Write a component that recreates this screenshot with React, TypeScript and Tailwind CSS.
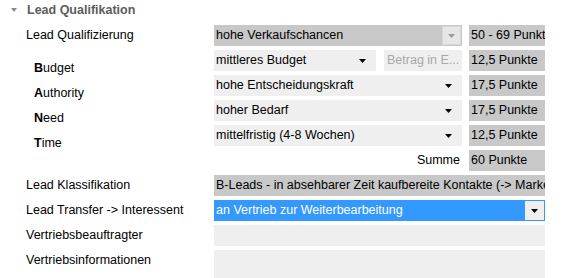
import React from 'react';

// caret icons used by the select boxes
function Caret({ color = '#000' }: { color?: string }) {
  return (
    <svg width="7" height="4" viewBox="0 0 7 4">
      <path d="M0 0h7L3.5 4z" fill={color} />
    </svg>
  );
}

function Row({ label, children, bant, tall }: { label: React.ReactNode; children: React.ReactNode; bant?: boolean; tall?: boolean }) {
  return (
    <div className={`flex ${tall ? 'h-[40px]' : 'h-[21px]'}`}>
      {bant ? (
        <div className="w-[214px] shrink-0 pl-[34px] pt-[11px] leading-[14px] whitespace-nowrap">{label}</div>
      ) : (
        <div className="w-[214px] shrink-0 pl-[26px] h-[21px] flex items-center whitespace-nowrap">{label}</div>
      )}
      {children}
    </div>
  );
}

function Points({ children }: { children: React.ReactNode }) {
  return (
    <div className="w-[76px] ml-[7px] shrink-0 bg-[#c8c8c8] pl-[2px] flex items-center overflow-hidden whitespace-nowrap">
      {children}
    </div>
  );
}

function Select({ value, className = 'w-[248px]' }: { value: string; className?: string }) {
  return (
    <div className={`${className} shrink-0 bg-[#efefef] pl-[2px] pr-[10px] flex items-center justify-between whitespace-nowrap`}>
      <span>{value}</span>
      <Caret />
    </div>
  );
}

function Bant({ letter, rest }: { letter: string; rest: string }) {
  return (
    <span>
      <b>{letter}</b>
      {rest}
    </span>
  );
}

export default function App() {
  return (
    <div className="w-[568px] h-[278px] overflow-hidden bg-white text-[12.5px] text-black font-['Liberation_Sans',Arial,sans-serif]">
      {/* Section header */}
      <div className="h-[20px] flex items-center pl-[11px]">
        <svg width="6" height="4" viewBox="0 0 6 4" className="mr-[10px]">
          <path d="M0 0h6L3 4z" fill="#8a8a8a" />
        </svg>
        <span className="font-bold text-[12.5px] text-[#5c5c5c]">Lead Qualifikation</span>
      </div>

      <div className="flex flex-col gap-[4px] pt-[5px]">
        <Row label="Lead Qualifizierung">
          <div className="w-[248px] shrink-0 bg-[#c8c8c8] pl-[2px] flex items-center justify-between">
            <span>hohe Verkaufschancen</span>
            <div className="w-[19px] h-[19px] mr-[1px] bg-[#e6e6e6] border border-[#d8d8d8] flex items-center justify-center">
              <Caret color="#9a9a9a" />
            </div>
          </div>
          <Points>50 - 69 Punkte</Points>
        </Row>

        <Row bant label={<Bant letter="B" rest="udget" />}>
          <Select value="mittleres Budget" className="w-[162px]" />
          <div className="w-[78px] ml-[8px] shrink-0 bg-[#efefef] pl-[3px] flex items-center text-[#a8a8a8] whitespace-nowrap overflow-hidden">
            Betrag in E...
          </div>
          <Points>12,5 Punkte</Points>
        </Row>

        <Row bant label={<Bant letter="A" rest="uthority" />}>
          <Select value="hohe Entscheidungskraft" />
          <Points>17,5 Punkte</Points>
        </Row>

        <Row bant label={<Bant letter="N" rest="eed" />}>
          <Select value="hoher Bedarf" />
          <Points>17,5 Punkte</Points>
        </Row>

        <Row bant label={<Bant letter="T" rest="ime" />}>
          <Select value="mittelfristig (4-8 Wochen)" />
          <Points>12,5 Punkte</Points>
        </Row>

        <Row label="">
          <div className="w-[248px] shrink-0 flex items-center justify-end pr-[2px]">Summe</div>
          <Points>60 Punkte</Points>
        </Row>

        <Row label="Lead Klassifikation">
          <div className="w-[331px] shrink-0 bg-[#c8c8c8] pl-[2px] flex items-center overflow-hidden whitespace-nowrap">
            B-Leads - in absehbarer Zeit kaufbereite Kontakte (-&gt; Marketing)
          </div>
        </Row>

        <Row label="Lead Transfer -> Interessent">
          <div className="w-[331px] shrink-0 bg-[#3399ff] border border-[#3399ff] pl-[1px] flex items-center justify-between text-white whitespace-nowrap">
            <span>an Vertrieb zur Weiterbearbeitung</span>
            <div className="w-[19px] h-full bg-[#efefef] flex items-center justify-center">
              <Caret />
            </div>
          </div>
        </Row>

        <Row label="Vertriebsbeauftragter">
          <div className="w-[331px] shrink-0 bg-[#efefef]" />
        </Row>

        <Row tall label="Vertriebsinformationen">
          <div className="w-[331px] shrink-0 bg-[#efefef]" />
        </Row>
      </div>
    </div>
  );
}
